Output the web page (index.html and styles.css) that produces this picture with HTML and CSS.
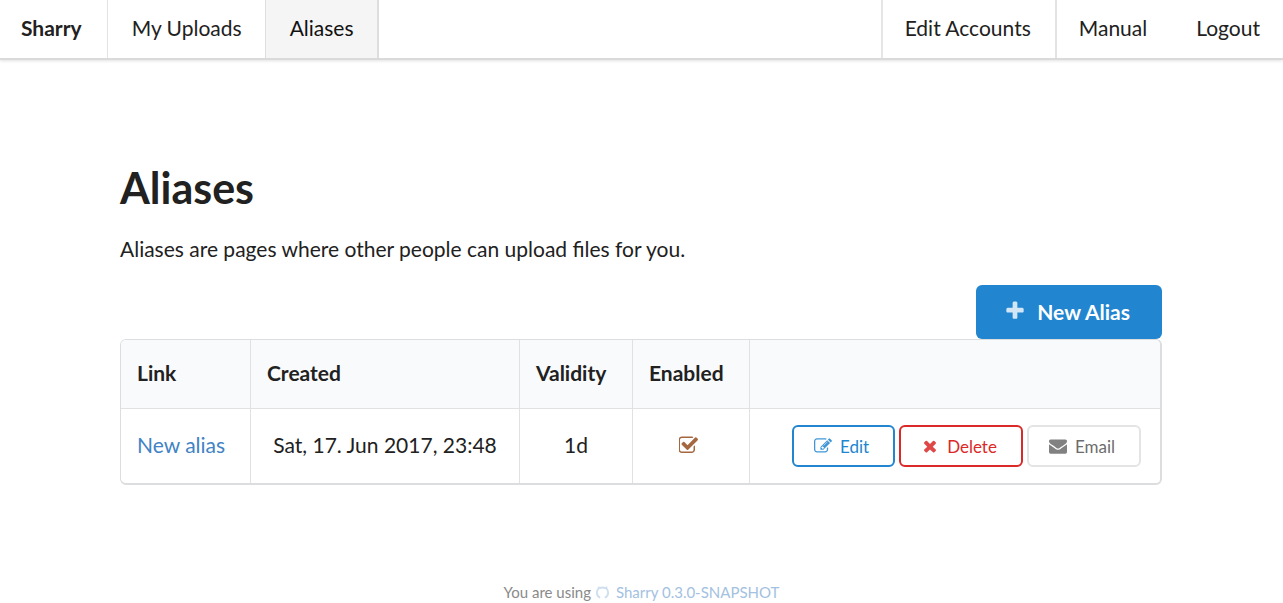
FILE: index.html
```html
<!DOCTYPE html>
<html lang="en">
<head>
<meta charset="utf-8">
<title>Sharry - Aliases</title>
<link rel="stylesheet" href="styles.css">
</head>
<body>
<nav class="menu">
  <a class="item brand" href="#">Sharry</a>
  <a class="item" href="#">My Uploads</a>
  <a class="item active" href="#">Aliases</a>
  <div class="menu-right">
    <a class="item edged" href="#">Edit Accounts</a>
    <a class="item" href="#">Manual</a>
    <a class="item" href="#">Logout</a>
  </div>
</nav>
<main class="container">
  <h1 class="title">Aliases</h1>
  <p class="intro">Aliases are pages where other people can upload files for you.</p>
  <div class="toolbar">
    <button class="primary" type="button"><svg class="icon plus" viewBox="0 0 1792 1792" aria-hidden="true"><path d="M1600 736v192q0 40-28 68t-68 28h-416v416q0 40-28 68t-68 28h-192q-40 0-68-28t-28-68v-416h-416q-40 0-68-28t-28-68v-192q0-40 28-68t68-28h416v-416q0-40 28-68t68-28h192q40 0 68 28t28 68v416h416q40 0 68 28t28 68z"/></svg>New Alias</button>
  </div>
  <div class="table-frame">
  <table class="table">
    <colgroup><col class="c-link"><col class="c-created"><col class="c-validity"><col class="c-enabled"><col></colgroup>
    <thead>
      <tr><th>Link</th><th>Created</th><th>Validity</th><th>Enabled</th><th></th></tr>
    </thead>
    <tbody>
      <tr>
        <td><a class="link" href="#">New alias</a></td>
        <td class="center">Sat, 17. Jun 2017, 23:48</td>
        <td class="center">1d</td>
        <td class="center"><svg class="icon check" viewBox="128 0 1664 1792" role="img" aria-label="enabled"><path d="M1472 930v318q0 119-84.5 203.5t-203.5 84.5h-832q-119 0-203.5-84.5t-84.5-203.5v-832q0-119 84.5-203.5t203.5-84.5h832q63 0 117 25 15 7 18 23 3 17-9 29l-49 49q-10 10-23 10-3 0-9-2-23-6-45-6h-832q-66 0-113 47t-47 113v832q0 66 47 113t113 47h832q66 0 113-47t47-113v-254q0-13 9-22l64-64q10-10 23-10 6 0 12 3 20 8 20 29zm231-489l-814 814q-24 24-57 24t-57-24l-430-430q-24-24-24-57t24-57l110-110q24-24 57-24t57 24l263 263 647-647q24-24 57-24t57 24l110 110q24 24 24 57t-24 57z"/></svg></td>
        <td>
          <div class="actions">
            <button class="small blue" type="button"><svg class="icon" viewBox="0 0 1792 1792" aria-hidden="true"><path d="M888 1184l116-116-152-152-116 116v56h96v96h56zm440-720q-16-16-33 1l-350 350q-17 17-1 33t33-1l350-350q17-17 1-33zm80 594v190q0 119-84.5 203.5t-203.5 84.5h-832q-119 0-203.5-84.5t-84.5-203.5v-832q0-119 84.5-203.5t203.5-84.5h832q63 0 117 25 15 7 18 23 3 17-9 29l-49 49q-14 14-32 8-23-6-45-6h-832q-66 0-113 47t-47 113v832q0 66 47 113t113 47h832q66 0 113-47t47-113v-126q0-13 9-22l64-64q15-15 35-7t20 29zm-96-738l288 288-672 672h-288v-288zm444 132l-92 92-288-288 92-92q28-28 68-28t68 28l152 152q28 28 28 68t-28 68z"/></svg>Edit</button>
            <button class="small red" type="button"><svg class="icon" viewBox="0 0 1792 1792" aria-hidden="true"><path d="M1490 1322q0 40-28 68l-136 136q-28 28-68 28t-68-28l-294-294-294 294q-28 28-68 28t-68-28l-136-136q-28-28-28-68t28-68l294-294-294-294q-28-28-28-68t28-68l136-136q28-28 68-28t68 28l294 294 294-294q28-28 68-28t68 28l136 136q28 28 28 68t-28 68l-294 294 294 294q28 28 28 68z"/></svg>Delete</button>
            <button class="small grey" type="button"><svg class="icon" viewBox="0 0 1792 1792" aria-hidden="true"><path d="M1792 710v794q0 66-47 113t-113 47h-1472q-66 0-113-47t-47-113v-794q44 49 101 87 362 246 497 345 57 42 92.500 65.500t94.500 48 110 24.500h2q51 0 110-24.500t94.500-48 92.500-65.500q170-123 498-345 57-39 100-87zm0-294q0 79-49 151t-122 123q-376 261-468 325-10 7-42.500 31t-54 38.500-52 32.500-57.500 27-50 9h-2q-23 0-50-9t-57.500-27-52-32.500-54-38.500-42.500-31q-91-64-262-182.500t-205-142.500q-62-42-117-115.500t-55-136.500q0-78 41.500-130t118.500-52h1472q65 0 112.500 47t47.500 113z"/></svg>Email</button>
          </div>
        </td>
      </tr>
    </tbody>
  </table>
  </div>
</main>
<footer class="footer">
  <span>You are using</span>
  <a class="repo" href="#"><svg class="octo" viewBox="0 0 16 16" aria-hidden="true"><path d="M5.500 13.600C3.200 12.600 2 10.600 2 8.200c0-1.700.6-3.200 1.700-4.300L3.900 2.900l1.500.3c1.600-.6 3.600-.6 5.200 0l1.500-.3.2 1c1.100 1.100 1.700 2.600 1.700 4.300 0 2.400-1.200 4.400-3.500 5.400"/></svg>Sharry 0.3.0-SNAPSHOT</a>
</footer>
</body>
</html>
```

FILE: styles.css
```css
* {
  box-sizing: border-box;
}

body {
  margin: 0;
  min-height: 100vh;
  display: flex;
  flex-direction: column;
  font-family: Lato, "Liberation Sans", sans-serif;
  font-size: 21px;
  line-height: 30px;
  color: #212121;
  background: #fff;
}

a {
  text-decoration: none;
}

.menu {
  display: flex;
  border-bottom: 2px solid #dadada;
  box-shadow: 0 1px 3px rgba(0, 0, 0, 0.12);
}

.menu-right {
  display: flex;
  margin-left: auto;
}

.item {
  padding: 13px 23px 15px 24px;
  border-right: 1px solid #e3e3e3;
  color: #212121;
}

.brand {
  padding-right: 25px;
  padding-left: 21px;
  font-weight: 700;
}

.active {
  background: #f5f5f5;
  border-right: 2px solid #dedede;
  border-left: 1px solid #dedede;
  margin-left: -1px;
  color: #111;
}

.edged {
  border-left: 2px solid #e6e6e6;
  border-right-width: 2px;
}

.menu-right .item {
  padding-left: 22px;
}

.menu-right .edged {
  padding-right: 24px;
}

.menu-right .item:not(.edged) {
  border-right: 0;
}

.menu-right .item:last-child {
  padding-left: 26px;
}

.container {
  flex: 1;
  width: 100%;
  padding: 100px 121px 0 120px;
}

.title {
  margin: 0;
  font-size: 43px;
  line-height: 56px;
}

.intro {
  margin: 18px 0 21px;
}

.toolbar {
  display: flex;
  justify-content: flex-end;
}

button {
  display: inline-flex;
  align-items: center;
  font-family: inherit;
  cursor: pointer;
}

.icon {
  fill: currentColor;
}

.primary {
  height: 54px;
  padding: 0 32px 2px 28px;
  gap: 11px;
  border: 0;
  border-radius: 6px;
  background: #2185d0;
  color: #fff;
  font-size: 21px;
  font-weight: 700;
}

.plus {
  width: 22px;
  height: 22px;
  opacity: 0.8;
}

.table-frame {
  border: solid #dcdddf;
  border-width: 1px 2px 2px 1px;
  border-radius: 6px;
  overflow: hidden;
}

.table {
  width: 100%;
  table-layout: fixed;
  border-collapse: separate;
  border-spacing: 0;
}

.c-link { width: 129px; }
.c-created { width: 269px; }
.c-validity { width: 113px; }
.c-enabled { width: 117px; }

th,
td {
  padding: 0 16px 2px;
  border-left: 1px solid #dfe1e3;
  text-align: left;
}

th:first-child,
td:first-child {
  border-left: 0;
}

th {
  height: 69px;
  background: #f9fafb;
  border-bottom: 1px solid #dfe1e3;
}

td {
  height: 74px;
}

td:last-child {
  padding-bottom: 0;
}

.center {
  text-align: center;
}

.link {
  color: #4183c4;
}

.check {
  display: block;
  width: 20px;
  height: 21px;
  margin: 0 auto;
  color: #a5673f;
}

td:has(.check) {
  padding-right: 20px;
}

.actions {
  display: flex;
  justify-content: flex-end;
  gap: 4px;
  padding-right: 3px;
}

.small {
  height: 42px;
  padding: 0 24px 0 20px;
  gap: 8px;
  border: 2px solid;
  border-radius: 6px;
  background: #fff;
  font-size: 17px;
}

.small .icon {
  width: 18px;
  height: 18px;
  opacity: 0.85;
}

.blue {
  color: #2185d0;
}

.red {
  color: #db2828;
}

.grey {
  color: #6c6c6c;
  border-color: #e4e4e4;
}

.footer {
  display: flex;
  justify-content: center;
  gap: 4px;
  padding-bottom: 1px;
  font-size: 15px;
  line-height: 20px;
  color: #8a8a8a;
}

.repo {
  display: flex;
  align-items: center;
  gap: 6px;
  color: #a3c1e0;
}

.octo {
  width: 15px;
  height: 15px;
  fill: none;
  stroke: #cfdfef;
  stroke-width: 2;
}
```
